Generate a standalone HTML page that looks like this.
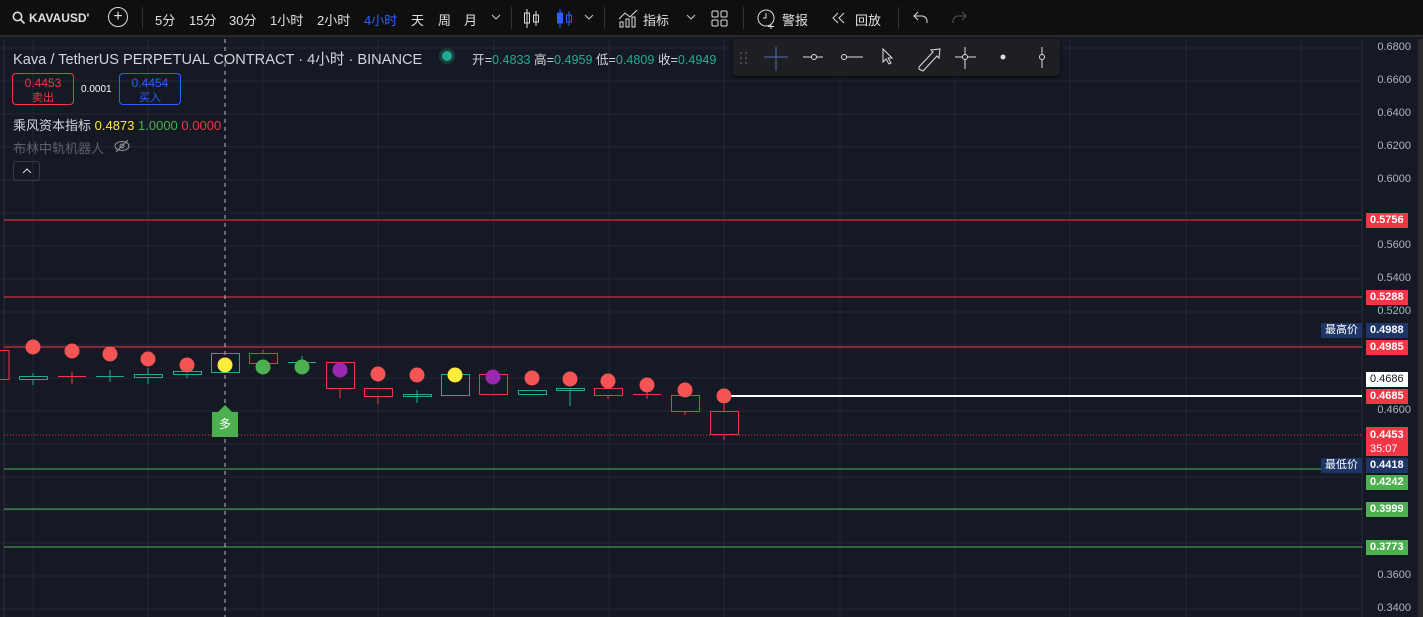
<!DOCTYPE html>
<html><head><meta charset="utf-8"><style>
*{margin:0;padding:0;box-sizing:border-box}
body{width:1423px;height:617px;overflow:hidden;background:#151924;font-family:"Liberation Sans","Noto Sans CJK SC",sans-serif;color:#d1d4dc;position:relative}
.tb{position:absolute;left:0;top:0;width:1423px;height:37px;background:#0f0f0f;border-bottom:2px solid #2a2a2a;font-size:13px;color:#e0e0e0}
.tb span{position:absolute;top:10px;white-space:nowrap}
.tb svg{position:absolute}
.sep{position:absolute;top:7px;width:1px;height:22px;background:#333}
.ab{position:absolute;right:0;font-size:11px;color:#b2b5be}
.lab{position:absolute;font-size:11px;font-weight:bold;color:#fff;padding:0 4px;height:15px;line-height:15px}
</style></head><body>
<div class="tb">
<svg style="left:12px;top:11px" width="14" height="14" stroke="#ddd" stroke-width="1.6" fill="none"><circle cx="5.5" cy="5.5" r="4.2"/><line x1="8.5" y1="8.5" x2="12.5" y2="12.5"/></svg>
<span style="left:29px;font-weight:bold;font-size:12px;top:11px">KAVAUSD'</span>
<span style="left:108px;top:7px;width:20px;height:20px;border:1.5px solid #ddd;border-radius:50%;text-align:center;line-height:17px;font-size:16px">+</span>
<div class="sep" style="left:142px"></div>
<span style="left:155px">5分</span><span style="left:189px">15分</span><span style="left:229px">30分</span><span style="left:270px">1小时</span><span style="left:317px">2小时</span><span style="left:364px;color:#2962ff">4小时</span><span style="left:411px">天</span><span style="left:438px">周</span><span style="left:464px">月</span>
<svg style="left:491px;top:14px" width="10" height="7" stroke="#ccc" fill="none"><path d="M1 1l4 4 4-4"/></svg>
<div class="sep" style="left:511px"></div>
<svg style="left:523px;top:8px" width="60" height="22"><g stroke="#ddd" fill="none"><line x1="4" y1="1" x2="4" y2="20"/><rect x="1.5" y="5" width="5" height="10"/><line x1="13" y1="3" x2="13" y2="18"/><rect x="10.5" y="7" width="5" height="7"/></g><g stroke="#2962ff" fill="none"><line x1="37" y1="1" x2="37" y2="20"/><rect x="34.5" y="5" width="5" height="10" fill="#2962ff"/><line x1="46" y1="3" x2="46" y2="18"/><rect x="43.5" y="7" width="5" height="7"/></g></svg>
<svg style="left:584px;top:14px" width="10" height="7" stroke="#ccc" fill="none"><path d="M1 1l4 4 4-4"/></svg>
<div class="sep" style="left:604px"></div>
<svg style="left:617px;top:7px" width="22" height="22" stroke="#ddd" fill="none"><path d="M2 12l6-6 5 4 7-7"/><rect x="3" y="15" width="3" height="5"/><rect x="9" y="12" width="3" height="8"/><rect x="15" y="10" width="3" height="10"/></svg>
<span style="left:643px">指标</span>
<svg style="left:686px;top:14px" width="10" height="7" stroke="#ccc" fill="none"><path d="M1 1l4 4 4-4"/></svg>
<svg style="left:711px;top:10px" width="17" height="17" stroke="#ddd" fill="none"><rect x="1" y="1" width="6" height="6" rx="1"/><rect x="10" y="1" width="6" height="6" rx="1"/><rect x="1" y="10" width="6" height="6" rx="1"/><rect x="10" y="10" width="6" height="6" rx="1"/></svg>
<div class="sep" style="left:743px"></div>
<svg style="left:756px;top:7px" width="22" height="22" stroke="#ddd" fill="none"><circle cx="10" cy="11" r="8"/><path d="M10 6v5h-3M15 17v5M12 19.5h6"/></svg>
<span style="left:782px">警报</span>
<svg style="left:832px;top:12px" width="16" height="12" stroke="#ddd" fill="none"><path d="M6 1L1 6l5 5M12 1L7 6l5 5"/></svg>
<span style="left:855px">回放</span>
<div class="sep" style="left:898px"></div>
<svg style="left:913px;top:10px" width="16" height="14" stroke="#ddd" fill="none"><path d="M5 2L1 6l4 4M1 6h8a5 5 0 0 1 5 5v2"/></svg>
<svg style="left:951px;top:10px" width="16" height="14" stroke="#555" fill="none"><path d="M11 2l4 4-4 4M15 6H7a5 5 0 0 0-5 5v2"/></svg>
</div>

<svg style="position:absolute;left:0;top:39px" width="1423" height="578">
<g transform="translate(0,-39)">
<g stroke="#232836" stroke-width="1">
<line x1="33" y1="39" x2="33" y2="617"/><line x1="148" y1="39" x2="148" y2="617"/><line x1="263" y1="39" x2="263" y2="617"/><line x1="378" y1="39" x2="378" y2="617"/><line x1="494" y1="39" x2="494" y2="617"/><line x1="609" y1="39" x2="609" y2="617"/><line x1="724" y1="39" x2="724" y2="617"/><line x1="840" y1="39" x2="840" y2="617"/><line x1="955" y1="39" x2="955" y2="617"/><line x1="1070" y1="39" x2="1070" y2="617"/><line x1="1186" y1="39" x2="1186" y2="617"/><line x1="1301" y1="39" x2="1301" y2="617"/>
<line x1="0" y1="48" x2="1362" y2="48"/><line x1="0" y1="81" x2="1362" y2="81"/><line x1="0" y1="114" x2="1362" y2="114"/><line x1="0" y1="147" x2="1362" y2="147"/><line x1="0" y1="180" x2="1362" y2="180"/><line x1="0" y1="213" x2="1362" y2="213"/><line x1="0" y1="246" x2="1362" y2="246"/><line x1="0" y1="279" x2="1362" y2="279"/><line x1="0" y1="312" x2="1362" y2="312"/><line x1="0" y1="345" x2="1362" y2="345"/><line x1="0" y1="378" x2="1362" y2="378"/><line x1="0" y1="411" x2="1362" y2="411"/><line x1="0" y1="444" x2="1362" y2="444"/><line x1="0" y1="477" x2="1362" y2="477"/><line x1="0" y1="510" x2="1362" y2="510"/><line x1="0" y1="543" x2="1362" y2="543"/><line x1="0" y1="576" x2="1362" y2="576"/><line x1="0" y1="609" x2="1362" y2="609"/>
</g>
<line x1="4" y1="39" x2="4" y2="617" stroke="#2a2e39"/>
<line x1="1362" y1="39" x2="1362" y2="617" stroke="#2a2e39"/>
<g stroke-width="1">
<line x1="4" y1="220" x2="1362" y2="220" stroke="#f23645"/>
<line x1="4" y1="297" x2="1362" y2="297" stroke="#f23645"/>
<line x1="4" y1="347" x2="1362" y2="347" stroke="#f23645"/>
<line x1="4" y1="469" x2="1362" y2="469" stroke="#4caf50"/>
<line x1="4" y1="509" x2="1362" y2="509" stroke="#4caf50"/>
<line x1="4" y1="547" x2="1362" y2="547" stroke="#4caf50"/>
<line x1="4" y1="435" x2="1362" y2="435" stroke="#f23645" stroke-dasharray="1 2"/>
</g>
<line x1="730" y1="396" x2="1362" y2="396" stroke="#fff" stroke-width="2"/>
<line x1="225" y1="39" x2="225" y2="617" stroke="#bbb" stroke-dasharray="4 4"/>
<g fill="none" stroke-width="1">
<g stroke="#f23645"><rect x="-10" y="350.5" width="19" height="29"/></g>
<g stroke="#22ab94"><line x1="33" y1="373" x2="33" y2="385"/><rect x="19.5" y="376.5" width="28" height="3" fill="#151924"/></g>
<g stroke="#f23645"><line x1="72" y1="372" x2="72" y2="384"/><line x1="58" y1="376.5" x2="86" y2="376.5"/></g>
<g stroke="#22ab94"><line x1="110" y1="370" x2="110" y2="382"/><line x1="96" y1="376.5" x2="124" y2="376.5"/></g>
<g stroke="#22ab94"><line x1="148" y1="368" x2="148" y2="384"/><rect x="134.5" y="374.5" width="28" height="3" fill="#151924"/></g>
<g stroke="#22ab94"><line x1="187" y1="366" x2="187" y2="378"/><rect x="173.5" y="371.5" width="28" height="3" fill="#151924"/></g>
<g stroke="#22ab94"><rect x="211.5" y="353.5" width="28" height="19"/></g>
<g stroke="#f23645"><line x1="263" y1="350" x2="263" y2="354"/><rect x="249.5" y="353.5" width="28" height="10"/></g>
<g stroke="#22ab94"><line x1="302" y1="356" x2="302" y2="369"/><line x1="288" y1="362.5" x2="316" y2="362.5"/></g>
<g stroke="#f23645"><line x1="340" y1="388" x2="340" y2="398"/><rect x="326.5" y="362.5" width="28" height="26"/></g>
<g stroke="#f23645"><line x1="378" y1="396" x2="378" y2="404"/><rect x="364.5" y="388.5" width="28" height="8"/></g>
<g stroke="#22ab94"><line x1="417" y1="390" x2="417" y2="403"/><rect x="403.5" y="394.5" width="28" height="2"/></g>
<g stroke="#22ab94"><rect x="441.5" y="374.5" width="28" height="21"/></g>
<g stroke="#f23645"><rect x="479.5" y="374.5" width="28" height="20"/></g>
<g stroke="#22ab94"><rect x="518.5" y="390.5" width="28" height="4"/></g>
<g stroke="#22ab94"><line x1="570" y1="388" x2="570" y2="406"/><rect x="556.5" y="388.5" width="28" height="2"/></g>
<g stroke="#f23645"><line x1="608" y1="395" x2="608" y2="399"/><rect x="594.5" y="388.5" width="28" height="7"/></g>
<g stroke="#f23645"><line x1="647" y1="390" x2="647" y2="399"/><line x1="633" y1="394.5" x2="661" y2="394.5"/></g>
<g stroke="#f23645"><line x1="685" y1="411" x2="685" y2="415"/><rect x="671.5" y="395.5" width="28" height="16"/></g>
<g stroke="#f23645"><line x1="724" y1="404" x2="724" y2="411"/><line x1="724" y1="434" x2="724" y2="440"/><rect x="710.5" y="411.5" width="28" height="23"/></g>
</g>
<g fill="#f45454">
<circle cx="33" cy="347" r="7.5"/><circle cx="72" cy="351" r="7.5"/><circle cx="110" cy="354" r="7.5"/><circle cx="148" cy="359" r="7.5"/><circle cx="187" cy="365" r="7.5"/><circle cx="378" cy="374" r="7.5"/><circle cx="417" cy="375" r="7.5"/><circle cx="532" cy="378" r="7.5"/><circle cx="570" cy="379" r="7.5"/><circle cx="608" cy="381" r="7.5"/><circle cx="647" cy="385" r="7.5"/><circle cx="685" cy="390" r="7.5"/><circle cx="724" cy="396" r="7.5"/>
</g>
<circle cx="225" cy="365" r="7.5" fill="#ffeb3b"/><circle cx="455" cy="375" r="7.5" fill="#ffeb3b"/>
<circle cx="263" cy="367" r="7.5" fill="#4caf50"/><circle cx="302" cy="367" r="7.5" fill="#4caf50"/>
<circle cx="340" cy="370" r="7.5" fill="#9c27b0"/><circle cx="493" cy="377" r="7.5" fill="#9c27b0"/>
<path d="M212 412h6l7-7 7 7h6v25h-26z" fill="#4caf50"/>
<text x="225" y="428" fill="#fff" font-size="12" text-anchor="middle" font-family="Noto Sans CJK SC,sans-serif">多</text>
</g></svg>

<div style="position:absolute;left:13px;top:48px;font-size:14.6px;color:#d1d4dc;white-space:nowrap">Kava / TetherUS PERPETUAL CONTRACT · 4小时 · BINANCE</div>
<div style="position:absolute;left:442px;top:51px;width:10px;height:10px;border-radius:50%;background:#22ab94;box-shadow:0 0 0 3px #1d3b38"></div>
<div style="position:absolute;left:472px;top:49px;font-size:12.6px;white-space:nowrap">开=<span style="color:#22ab94">0.4833</span> 高=<span style="color:#22ab94">0.4959</span> 低=<span style="color:#22ab94">0.4809</span> 收=<span style="color:#22ab94">0.4949</span></div>
<div style="position:absolute;left:12px;top:73px;width:62px;height:32px;border:1px solid #f23645;border-radius:4px;text-align:center;color:#f23645;font-size:12px;line-height:14px;padding-top:2px">0.4453<br><span style="font-size:11px">卖出</span></div>
<div style="position:absolute;left:81px;top:84px;font-size:10px;color:#fff">0.0001</div>
<div style="position:absolute;left:119px;top:73px;width:62px;height:32px;border:1px solid #2962ff;border-radius:4px;text-align:center;color:#2962ff;font-size:12px;line-height:14px;padding-top:2px">0.4454<br><span style="font-size:11px">买入</span></div>
<div style="position:absolute;left:13px;top:115px;font-size:13px;white-space:nowrap">乘风资本指标 <span style="color:#ffeb3b">0.4873</span> <span style="color:#4caf50">1.0000</span> <span style="color:#f23645">0.0000</span></div>
<div style="position:absolute;left:13px;top:138px;font-size:13px;color:#5d606b">布林中轨机器人</div>
<svg style="position:absolute;left:113px;top:138px" width="18" height="16" stroke="#999" fill="none"><ellipse cx="9" cy="8" rx="7" ry="4.5"/><circle cx="9" cy="8" r="2"/><line x1="3" y1="14" x2="15" y2="2"/></svg>
<div style="position:absolute;left:13px;top:161px;width:27px;height:20px;border:1px solid #363a45;border-radius:3px"><svg style="position:absolute;left:8px;top:6px" width="10" height="7" stroke="#ddd" fill="none"><path d="M1 5l4-4 4 4"/></svg></div>

<div style="position:absolute;left:733px;top:39px;width:327px;height:37px;background:#1e1f22;border-radius:4px;box-shadow:0 2px 4px rgba(0,0,0,.5)">
<svg width="327" height="37" fill="none" stroke="#ddd">
<g fill="#555" stroke="none"><circle cx="8" cy="14" r="1"/><circle cx="13" cy="14" r="1"/><circle cx="8" cy="19" r="1"/><circle cx="13" cy="19" r="1"/><circle cx="8" cy="24" r="1"/><circle cx="13" cy="24" r="1"/></g>
<g stroke="#5b6ac0"><line x1="43" y1="8" x2="43" y2="32"/><line x1="31" y1="18" x2="55" y2="18"/></g>
<line x1="70" y1="18" x2="90" y2="18"/><circle cx="81" cy="18" r="2.5" fill="#1e1f22"/>
<line x1="108" y1="18" x2="130" y2="18"/><circle cx="111" cy="18" r="2.5" fill="#1e1f22"/>
<path d="M150 10l0 13 3-3 3 5 2-1-3-5 4 0z"/>
<path d="M186 30l4 2 14-15 2 2 1-9-9 1 2 2-14 15z"/>
<line x1="232" y1="8" x2="232" y2="30"/><line x1="222" y1="18" x2="243" y2="18"/><circle cx="232" cy="18" r="2.5" fill="#1e1f22"/>
<circle cx="270" cy="18" r="2.5" fill="#ddd" stroke="none"/>
<line x1="309" y1="8" x2="309" y2="29"/><circle cx="309" cy="18" r="2.5" fill="#1e1f22"/>
</svg></div>

<div class="ab" style="top:41px;right:12px">0.6800</div>
<div class="ab" style="top:74px;right:12px">0.6600</div>
<div class="ab" style="top:107px;right:12px">0.6400</div>
<div class="ab" style="top:140px;right:12px">0.6200</div>
<div class="ab" style="top:173px;right:12px">0.6000</div>
<div class="ab" style="top:239px;right:12px">0.5600</div>
<div class="ab" style="top:272px;right:12px">0.5400</div>
<div class="ab" style="top:305px;right:12px">0.5200</div>
<div class="ab" style="top:404px;right:12px">0.4600</div>
<div class="ab" style="top:569px;right:12px">0.3600</div>
<div class="ab" style="top:602px;right:12px">0.3400</div>

<div class="lab" style="left:1366px;top:213px;background:#f23645">0.5756</div>
<div class="lab" style="left:1366px;top:290px;background:#f23645">0.5288</div>
<div class="lab" style="left:1321px;top:323px;background:#1e3566;font-weight:normal">最高价</div>
<div class="lab" style="left:1366px;top:323px;background:#1e3566">0.4988</div>
<div class="lab" style="left:1366px;top:340px;background:#f23645">0.4985</div>
<div class="lab" style="left:1366px;top:372px;background:#fff;color:#131722;font-weight:normal">0.4686</div>
<div class="lab" style="left:1366px;top:389px;background:#f23645">0.4685</div>
<div class="lab" style="left:1366px;top:427px;background:#f23645;height:29px;line-height:14px;padding-top:1px">0.4453<br><span style="font-weight:normal">35:07</span></div>
<div class="lab" style="left:1321px;top:458px;background:#1e3566;font-weight:normal">最低价</div>
<div class="lab" style="left:1366px;top:458px;background:#1e3566">0.4418</div>
<div class="lab" style="left:1366px;top:475px;background:#4caf50">0.4242</div>
<div class="lab" style="left:1366px;top:502px;background:#4caf50">0.3999</div>
<div class="lab" style="left:1366px;top:540px;background:#4caf50">0.3773</div>
<div style="position:absolute;left:1418px;top:39px;width:5px;height:578px;background:#2a2a2a"></div>
</body></html>
